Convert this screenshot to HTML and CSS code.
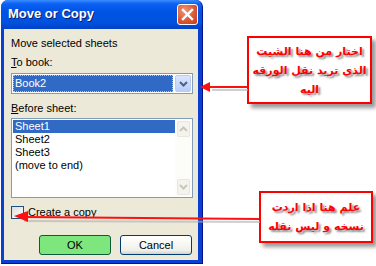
FILE: index.html
```html
<!DOCTYPE html>
<html lang="en">

<head>
  <meta charset="UTF-8" />
  <title>Move or Copy</title>
  <link rel="stylesheet" href="styles.css">
</head>

<body>
  <div class="page">
    <div class="dialog">
      <div class="titlebar">
        <span class="title">Move or Copy</span>
        <span class="close">
          <svg width="13" height="13" viewBox="0 0 13 13">
            <path d="M2 2 L11 11 M11 2 L2 11" stroke="#fff" stroke-width="2.4" stroke-linecap="square" />
          </svg>
        </span>
      </div>

      <div class="content">
        <p class="label first">Move selected sheets</p>
        <p class="label"><u>T</u>o book:</p>
        <div class="combo">
          <span class="combo-value">Book2</span>
          <span class="combo-btn">
            <svg width="9" height="6" viewBox="0 0 9 6">
              <path d="M1 1 L4.5 4.5 L8 1" fill="none" stroke="#4d6185" stroke-width="2" />
            </svg>
          </span>
        </div>

        <p class="label before"><u>B</u>efore sheet:</p>
        <div class="listbox">
          <ul class="items">
            <li class="selected">Sheet1</li>
            <li>Sheet2</li>
            <li>Sheet3</li>
            <li>(move to end)</li>
          </ul>
          <div class="scrollbar">
            <span class="sb-btn">
              <svg width="9" height="6" viewBox="0 0 9 6">
                <path d="M1 5 L4.5 1.5 L8 5" fill="none" stroke="#c9c7ba" stroke-width="2" />
              </svg>
            </span>
            <span class="sb-btn">
              <svg width="9" height="6" viewBox="0 0 9 6">
                <path d="M1 1 L4.5 4.5 L8 1" fill="none" stroke="#c9c7ba" stroke-width="2" />
              </svg>
            </span>
          </div>
        </div>

        <div class="check">
          <span class="box"></span>
          <span>Create a copy</span>
        </div>

        <div class="buttons">
          <span class="btn ok">OK</span>
          <span class="btn">Cancel</span>
        </div>
      </div>
    </div>

    <div class="note note-top">
      <p>اختار من هنا الشيت</p>
      <p>الذى تريد نقل الورقه</p>
      <p>اليه</p>
    </div>

    <div class="note note-bottom">
      <p>علم هنا اذا اردت</p>
      <p>نسخه و ليس نقله</p>
    </div>

    <svg class="arrows" width="376" height="266" viewBox="0 0 376 266">
      <g stroke="#b0b0b0" stroke-width="2" fill="#b0b0b0" opacity="0.6">
        <path d="M212 90 L248 90" />
        <path d="M24 221 L260 222" />
      </g>
      <g stroke="#ff1010" stroke-width="2" fill="#ff1010">
        <path d="M208 87 L247 87" />
        <path d="M200 87 L210 82 L210 92 Z" stroke="none" />
        <path d="M26 217 L259 219" />
        <path d="M14 216 L28 211 L28 222 Z" stroke="none" />
      </g>
    </svg>
  </div>
</body>

</html>
```

FILE: styles.css
```css
* {
  margin: 0px;
  padding: 0px;
  box-sizing: border-box;
}

body {
  background: #fff;
  font-family: "Liberation Sans", Arial, sans-serif;
  font-size: 11px;
  color: #000;
}

.page {
  position: relative;
  width: 376px;
  height: 266px;
  padding-left: 1px;
}

.dialog {
  width: 202px;
  height: 264px;
  background: #0a3fd0;
  border-radius: 7px 7px 0 0;
  display: flex;
  flex-direction: column;
  padding: 0 4px 3px 3px;
  border-bottom: 1px solid #00138c;
  border-right: 1px solid #00138c;
}

.titlebar {
  height: 29px;
  display: flex;
  align-items: center;
  justify-content: space-between;
  margin: 0 -4px 0 -3px;
  padding: 0 4px 0 7px;
  border-radius: 7px 7px 0 0;
  background: linear-gradient(#3a8cff 0px, #0b5ff2 4px, #0054e3 12px, #0051e0 22px, #0042c8 29px);
}

.title {
  color: #fff;
  font-weight: bold;
  font-size: 13px;
  text-shadow: 1px 1px 0 #0a1e6a;
  padding-bottom: 2px;
}

.close {
  width: 21px;
  height: 21px;
  border: 1px solid #fff;
  border-radius: 3px;
  background: radial-gradient(circle at 35% 30%, #f0957a, #d9532f 60%, #c2401d);
  display: flex;
  align-items: center;
  justify-content: center;
  margin-bottom: 1px;
}

.content {
  flex: 1;
  background: #ece9d8;
  padding: 0 5px 0 7px;
}

.label {
  height: 13px;
  line-height: 13px;
  margin-top: 6px;
}

.label.first {
  margin-top: 8px;
}

.label.before {
  margin-top: 8px;
}

.combo {
  margin-top: 4px;
  height: 21px;
  border: 1px solid #7f9db9;
  background: #fff;
  display: flex;
  padding: 1px;
  gap: 2px;
}

.combo-value {
  flex: 1;
  background: #316ac5;
  color: #fff;
  outline: 1px dotted #e8c060;
  outline-offset: -1px;
  line-height: 17px;
  padding-left: 2px;
}

.combo-btn {
  width: 16px;
  border: 1px solid #b9cbf3;
  border-radius: 2px;
  background: linear-gradient(#dbe6fd, #b8cdf8);
  display: flex;
  align-items: center;
  justify-content: center;
}

.listbox {
  margin-top: 3px;
  height: 80px;
  border: 1px solid #7f9db9;
  background: #fff;
  display: flex;
  padding: 1px;
}

.items {
  list-style: none;
  flex: 1;
}

.items li {
  height: 13px;
  line-height: 13px;
  padding-left: 2px;
}

.items li.selected {
  background: #316ac5;
  color: #fff;
}

.scrollbar {
  width: 16px;
  background: #fcfcf8;
  display: flex;
  flex-direction: column;
  justify-content: space-between;
  padding: 1px 1px 1px 2px;
}

.sb-btn {
  height: 16px;
  border: 1px solid #e8e7de;
  border-radius: 2px;
  background: #f4f3ee;
  display: flex;
  align-items: center;
  justify-content: center;
}

.check {
  margin-top: 8px;
  display: flex;
  align-items: center;
  gap: 4px;
  height: 13px;
  line-height: 13px;
}

.box {
  width: 13px;
  height: 13px;
  border: 1px solid #1c5180;
  background: linear-gradient(135deg, #dcdcd7, #fff);
}

.buttons {
  margin-top: 16px;
  display: flex;
  gap: 9px;
  padding-left: 28px;
}

.btn {
  width: 72px;
  height: 20px;
  border: 1px solid #003c74;
  border-radius: 3px;
  background: linear-gradient(#fff, #f0f0ea 80%, #d6d0c5);
  display: flex;
  align-items: center;
  justify-content: center;
}

.btn.ok {
  background: #7de67d;
  border-color: #0e5a3c;
}

.note {
  position: absolute;
  background: #fff;
  border: 2px solid #ff0000;
  box-shadow: 4px 4px 4px #9a9a9a;
  font-family: "DejaVu Sans", sans-serif;
  font-weight: bold;
  font-size: 11px;
  color: #ff0000;
  text-shadow: 2px 2px 2px #8a8a8a;
  text-align: center;
  direction: rtl;
  white-space: nowrap;
  display: flex;
  flex-direction: column;
  justify-content: center;
  line-height: 19px;
}

.note-top {
  left: 247px;
  top: 36px;
  width: 125px;
  height: 68px;
}

.note-bottom {
  left: 259px;
  top: 191px;
  width: 114px;
  height: 52px;
}

.arrows {
  position: absolute;
  left: 0;
  top: 0;
  pointer-events: none;
}
```
